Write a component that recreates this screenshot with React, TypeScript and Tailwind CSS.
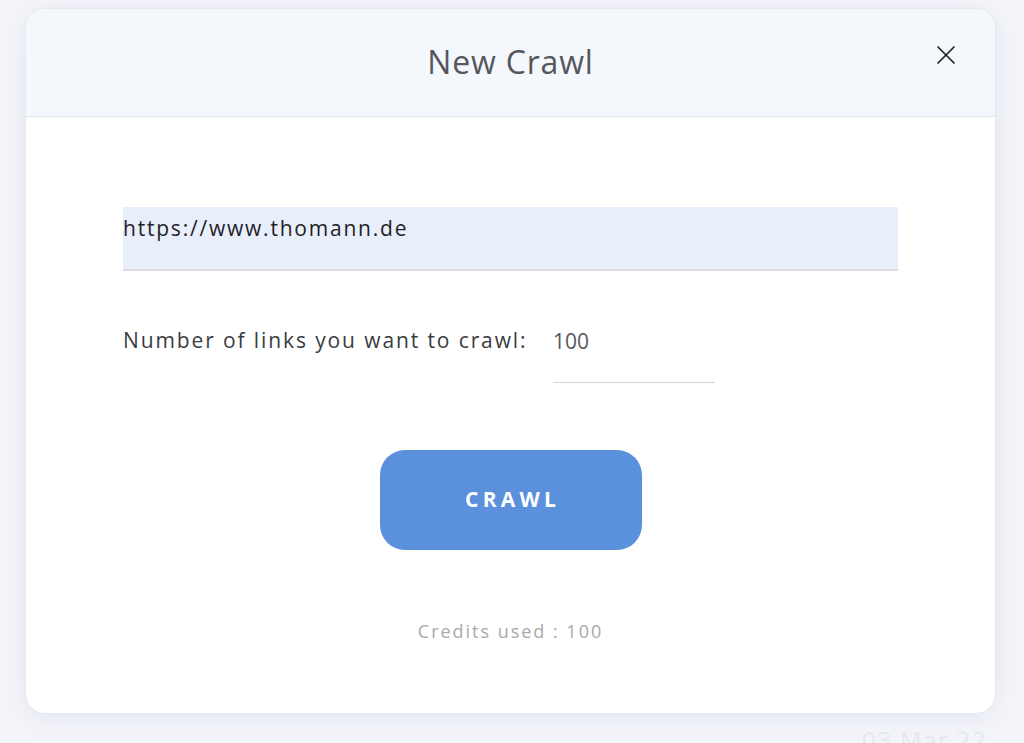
import { X } from 'lucide-react';

export default function App() {
    return (
        <div
            className="relative w-[1024px] h-[743px] overflow-hidden bg-[#f4f5fa]"
            style={{ fontFamily: '"Open Sans", Lato, sans-serif' }}
        >
            {/* page behind the overlay */}
            <div className="absolute left-[862px] top-[722px] text-[24px] tracking-[0.06em] text-[#e6e8f0]">
                03 Mar 22
            </div>

            <div className="relative pt-[8px] pl-[25px]">
                <div className="w-[971px] h-[706px] rounded-[20px] bg-white border border-[#e6e8ef] shadow-[0_4px_24px_rgba(120,130,170,0.12)] overflow-hidden flex flex-col">
                    <div className="relative h-[108px] shrink-0 bg-[#f4f7fc] border-b border-[#e2e4ea] flex items-center justify-center">
                        <h1 className="text-[32px] text-[#54575c] tracking-[0.025em] -mt-[2px]">New Crawl</h1>
                        <button className="absolute right-[33px] top-[30px] text-[#222]">
                            <X size={32} strokeWidth={1.3} />
                        </button>
                    </div>

                    <div className="flex flex-col px-[97px] pt-[90px]">
                        <div className="h-[64px] bg-[#e8effb] border-b-2 border-[#d9dbe3] pt-[6px] text-[21px] tracking-[0.085em] text-[#1f2227]">
                            https://www.thomann.de
                        </div>

                        <div className="flex items-start mt-[54px]">
                            <span className="text-[21px] tracking-[0.09em] text-[#3a3c40] w-[430px]">
                                Number of links you want to crawl:
                            </span>
                            <div className="w-[162px] h-[58px] border-b border-[#d2d4da] text-[21px] text-[#55585d] pt-[1px]">
                                100
                            </div>
                        </div>

                        <div className="flex justify-center mt-[67px]">
                            <button className="w-[262px] h-[100px] rounded-[25px] bg-[#5b90dc] text-white text-[21px] font-bold tracking-[0.2em] pl-[4px]">
                                CRAWL
                            </button>
                        </div>

                        <p className="mt-[68px] text-center text-[18px] tracking-[0.11em] text-[#a7a9ad]">
                            Credits used : 100
                        </p>
                    </div>
                </div>
            </div>
        </div>
    );
}
